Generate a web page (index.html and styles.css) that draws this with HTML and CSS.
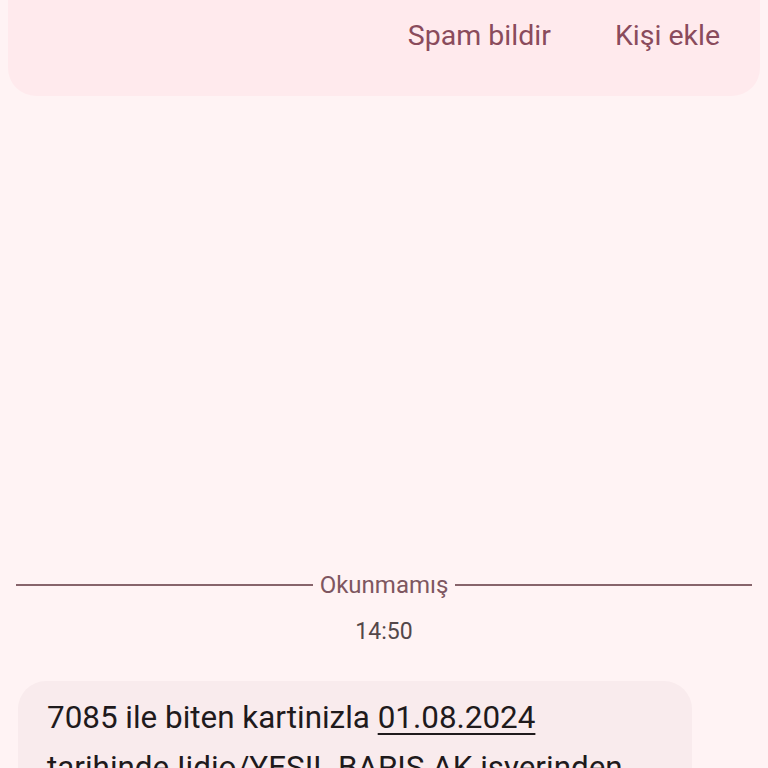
FILE: index.html
```html
<!DOCTYPE html>
<html>
<head>
<meta charset="utf-8">
<link rel="stylesheet" href="styles.css">
</head>
<body>
<div class="page">
  <header class="top-card">
    <button class="action">Spam bildir</button>
    <button class="action">Kişi ekle</button>
  </header>
  <main class="thread">
    <div class="divider">
      <span class="line"></span>
      <span class="label">Okunmamış</span>
      <span class="line"></span>
    </div>
    <div class="time">14:50</div>
    <div class="bubble">
      <p class="msg">7085 ile biten kartinizla <span class="link">01.08.2024</span><br>tarihinde Iidio/YESIL BARIS AK isyerinden</p>
    </div>
  </main>
</div>
</body>
</html>
```
FILE: styles.css
```css
html, body {
  margin: 0;
  padding: 0;
  background: #fff3f4;
  font-family: Roboto, "Noto Sans", sans-serif;
  overflow: hidden;
}
.page {
  width: 768px;
  height: 768px;
  overflow: hidden;
  display: flex;
  flex-direction: column;
}
.top-card {
  flex: none;
  margin: -30px 8px 0 8px;
  height: 126px;
  background: #ffeaed;
  border-radius: 0 0 28px 28px;
  display: flex;
  justify-content: flex-end;
  align-items: flex-end;
  gap: 64px;
  padding: 0 40px 43px 0;
  box-sizing: border-box;
}
.action {
  border: none;
  background: none;
  padding: 0;
  font-family: Roboto, sans-serif;
  font-size: 28.5px;
  line-height: 34px;
  color: #8a4b5c;
}
.thread {
  flex: none;
  display: flex;
  flex-direction: column;
  padding: 474px 16px 0 16px;
}
.divider {
  display: flex;
  align-items: center;
  gap: 7px;
  height: 30px;
}
.line {
  flex: 1;
  height: 2px;
  background: #87646b;
}
.label {
  font-size: 24px;
  color: #7e5660;
  line-height: 30px;
}
.time {
  text-align: center;
  font-size: 23px;
  color: #54474a;
  margin-top: 18px;
  line-height: 28px;
}
.bubble {
  margin: 35px 60px 0 2px;
  background: #f9ebed;
  border-radius: 28px;
  padding: 12px 30px 30px 29px;
  height: 120px;
}
.msg {
  margin: 0;
  font-size: 31.4px;
  line-height: 50px;
  color: #1f1a1c;
  white-space: nowrap;
}
.link {
  text-decoration: underline;
  text-decoration-thickness: 2px;
  text-underline-offset: 5px;
}
```
